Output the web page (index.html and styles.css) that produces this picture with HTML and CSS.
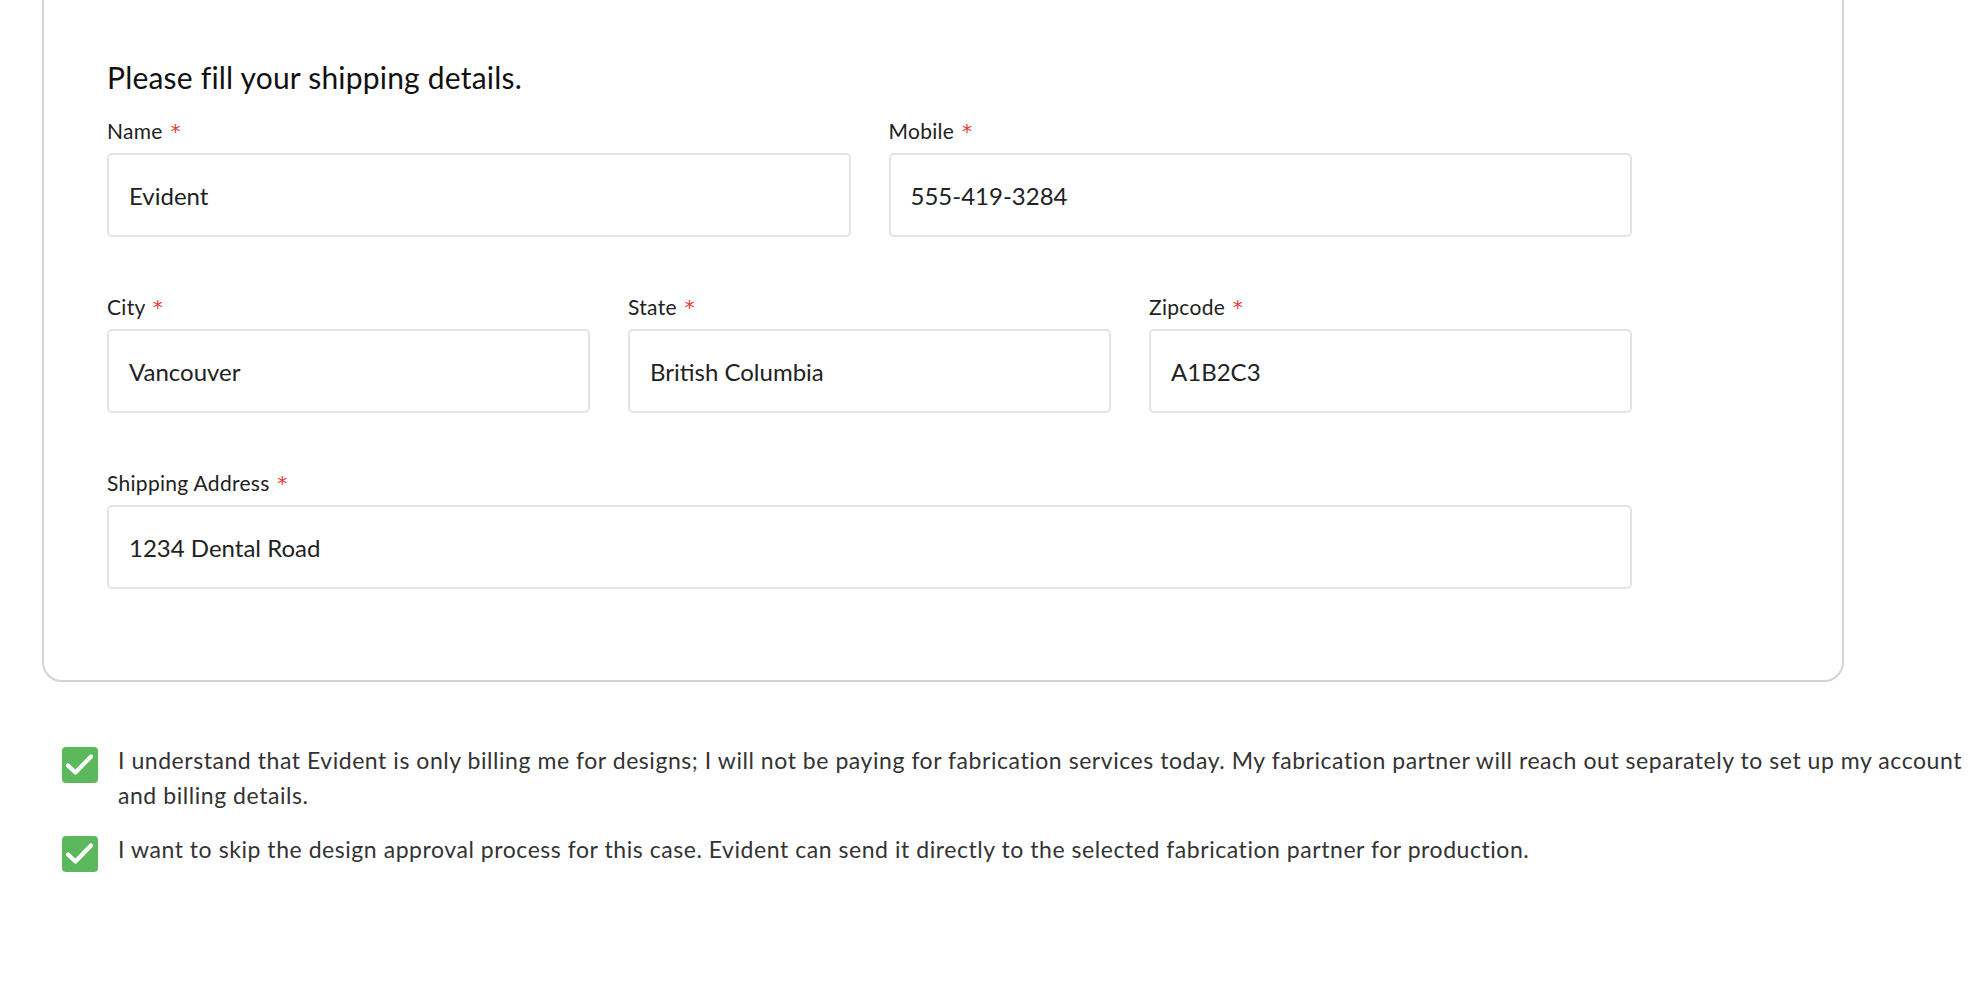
FILE: index.html
```html
<!DOCTYPE html>
<html lang="en">
<head>
<meta charset="utf-8">
<title>Shipping details</title>
<link rel="stylesheet" href="styles.css">
</head>
<body>
<div class="page">
  <section class="card">
    <h2 class="card-title">Please fill your shipping details.</h2>
    <div class="form">
      <div class="row row-2">
        <div class="field">
          <label class="label">Name <span class="req">*</span></label>
          <div class="input">Evident</div>
        </div>
        <div class="field">
          <label class="label">Mobile <span class="req">*</span></label>
          <div class="input">555-419-3284</div>
        </div>
      </div>
      <div class="row row-3">
        <div class="field">
          <label class="label">City <span class="req">*</span></label>
          <div class="input">Vancouver</div>
        </div>
        <div class="field">
          <label class="label">State <span class="req">*</span></label>
          <div class="input">British Columbia</div>
        </div>
        <div class="field">
          <label class="label">Zipcode <span class="req">*</span></label>
          <div class="input">A1B2C3</div>
        </div>
      </div>
      <div class="row row-1">
        <div class="field">
          <label class="label">Shipping Address <span class="req">*</span></label>
          <div class="input">1234 Dental Road</div>
        </div>
      </div>
    </div>
  </section>

  <div class="agreements">
    <div class="agree">
      <span class="check"><svg viewBox="0 0 36 36" width="36" height="36"><path d="M6 18.5 L13.5 25.5 L29 9.5" fill="none" stroke="#fff" stroke-width="4.2" stroke-linecap="round" stroke-linejoin="round"/></svg></span>
      <p class="agree-text">I understand that Evident is only billing me for designs; I will not be paying for fabrication services today. My fabrication partner will reach out separately to set up my account and billing details.</p>
    </div>
    <div class="agree">
      <span class="check"><svg viewBox="0 0 36 36" width="36" height="36"><path d="M6 18.5 L13.5 25.5 L29 9.5" fill="none" stroke="#fff" stroke-width="4.2" stroke-linecap="round" stroke-linejoin="round"/></svg></span>
      <p class="agree-text">I want to skip the design approval process for this case. Evident can send it directly to the selected fabrication partner for production.</p>
    </div>
  </div>
</div>
</body>
</html>
```

FILE: styles.css
```css
html, body {
  margin: 0;
  padding: 0;
  background: #ffffff;
}
body {
  font-family: "Lato", "Liberation Sans", sans-serif;
  color: #222222;
}
.page {
  width: 1978px;
}
.card {
  box-sizing: border-box;
  width: 1802px;
  margin: -40px 0 0 42px;
  padding: 98px 0 91px 63px;
  border: 2px solid #d3d3d3;
  border-radius: 0 0 20px 20px;
}
.card-title {
  margin: 0;
  font-size: 30px;
  font-weight: 400;
  line-height: 35px;
  letter-spacing: 0.2px;
  color: #111111;
}
.form {
  width: 1525px;
  margin-top: 24px;
  display: flex;
  flex-direction: column;
  gap: 58px;
}
.row {
  display: grid;
  column-gap: 38px;
}
.row-2 { grid-template-columns: 1fr 1fr; }
.row-3 { grid-template-columns: 1fr 1fr 1fr; }
.row-1 { grid-template-columns: 1fr; }
.field {
  display: flex;
  flex-direction: column;
  gap: 10px;
}
.label {
  font-size: 21px;
  line-height: 24px;
  letter-spacing: 0.3px;
  color: #222222;
}
.req {
  color: #e53935;
  font-family: "DejaVu Sans", sans-serif;
  font-size: 20px;
  font-weight: 400;
  line-height: 20px;
  margin-left: 2px;
  vertical-align: 1px;
}
.input {
  box-sizing: border-box;
  height: 84px;
  padding: 0 20px;
  display: flex;
  align-items: center;
  border: 2px solid #e3e3e8;
  border-radius: 5px;
  font-size: 24px;
  color: #222222;
}
.agreements {
  margin: 61px 0 0 62px;
  display: flex;
  flex-direction: column;
  gap: 19px;
}
.agree {
  display: flex;
  align-items: flex-start;
  gap: 20px;
}
.check {
  flex: none;
  width: 36px;
  height: 36px;
  margin-top: 4px;
  border-radius: 4px;
  background: #5cb85c;
  display: flex;
}
.agree-text {
  margin: 0;
  width: 1850px;
  font-size: 23px;
  line-height: 35px;
  letter-spacing: 0.55px;
  color: #333333;
}
```
